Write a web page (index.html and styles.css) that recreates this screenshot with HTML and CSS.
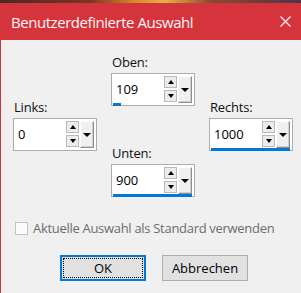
FILE: index.html
```html
<!DOCTYPE html>
<html lang="de">
<head>
    <meta charset="UTF-8">
    <title>Benutzerdefinierte Auswahl</title>
    <link rel="stylesheet" href="styles.css">
</head>
<body>
    <!-- Wallpaper strip above the dialog -->
    <div class="wallpaper"></div>

    <div class="window">
        <!-- Title Bar -->
        <div class="titlebar">
            <span class="title">Benutzerdefinierte Auswahl</span>
            <svg class="close" width="11" height="11" viewBox="0 0 11 11">
                <path d="M0.5 0.5 L10.5 10.5 M10.5 0.5 L0.5 10.5" stroke="#fff" stroke-width="1.1" fill="none"/>
            </svg>
        </div>

        <div class="dialog-body">
            <!-- Spin Fields -->
            <div class="fields">
                <div class="column side">
                    <div class="field">
                        <label class="field-label">Links:</label>
                        <div class="spinbox">
                            <div class="spin-row">
                                <span class="value">0</span>
                                <div class="spin-buttons">
                                    <span class="spin-btn"><i class="tri up"></i></span>
                                    <span class="spin-btn"><i class="tri down"></i></span>
                                </div>
                                <span class="drop-btn"><i class="tri drop"></i></span>
                            </div>
                            <div class="track"></div>
                        </div>
                    </div>
                </div>

                <div class="column middle">
                    <div class="field">
                        <label class="field-label">Oben:</label>
                        <div class="spinbox">
                            <div class="spin-row">
                                <span class="value">109</span>
                                <div class="spin-buttons">
                                    <span class="spin-btn"><i class="tri up"></i></span>
                                    <span class="spin-btn"><i class="tri down"></i></span>
                                </div>
                                <span class="drop-btn"><i class="tri drop"></i></span>
                            </div>
                            <div class="track"><div class="bar" style="width: 8px"></div></div>
                        </div>
                    </div>
                    <div class="field lower">
                        <label class="field-label">Unten:</label>
                        <div class="spinbox">
                            <div class="spin-row">
                                <span class="value">900</span>
                                <div class="spin-buttons">
                                    <span class="spin-btn"><i class="tri up"></i></span>
                                    <span class="spin-btn"><i class="tri down"></i></span>
                                </div>
                                <span class="drop-btn"><i class="tri drop"></i></span>
                            </div>
                            <div class="track"><div class="bar" style="width: 100%"></div></div>
                        </div>
                    </div>
                </div>

                <div class="column side">
                    <div class="field">
                        <label class="field-label">Rechts:</label>
                        <div class="spinbox">
                            <div class="spin-row">
                                <span class="value">1000</span>
                                <div class="spin-buttons">
                                    <span class="spin-btn"><i class="tri up"></i></span>
                                    <span class="spin-btn"><i class="tri down"></i></span>
                                </div>
                                <span class="drop-btn"><i class="tri drop"></i></span>
                            </div>
                            <div class="track"><div class="bar" style="width: 100%"></div></div>
                        </div>
                    </div>
                </div>
            </div>

            <!-- Default checkbox -->
            <div class="check-row">
                <span class="checkbox"></span>
                <span class="check-label">Aktuelle Auswahl als Standard verwenden</span>
            </div>

            <!-- Buttons -->
            <div class="buttons">
                <button class="btn default"><span>OK</span></button>
                <button class="btn">Abbrechen</button>
            </div>
        </div>
    </div>
</body>
</html>
```

FILE: styles.css
```css
/* General Styles */
html, body {
    margin: 0;
    padding: 0;
    background: #f0f0f0;
}

body {
    font-family: 'Open Sans', 'Noto Sans', sans-serif;
    width: 301px;
    height: 293px;
    overflow: hidden;
}

/* Wallpaper strip */
.wallpaper {
    height: 3px;
    background: linear-gradient(90deg, #4a2a24 0%, #7b3424 30%, #d98a2a 45%, #e8b040 55%, #8a4a30 70%, #4e3448 100%);
}

/* Window */
.window {
    height: 290px;
}

.titlebar {
    height: 37px;
    background-color: #d5343c;
    display: flex;
    align-items: center;
    justify-content: space-between;
    padding: 0 10px 0 11px;
}

.title {
    color: #fff4f6;
    font-size: 15px;
    letter-spacing: -0.45px;
    line-height: 20px;
}

.close {
    display: block;
}

.dialog-body {
    height: 253px;
    border-left: 1px solid #d5343c;
    background: #f0f0f0;
    padding-left: 12px;
}

/* Spin fields */
.fields {
    display: flex;
    gap: 14px;
    padding-top: 13px;
}

.column {
    width: 84px;
}

.column.side {
    padding-top: 45px;
}

.field-label {
    display: block;
    font-size: 13px;
    line-height: 18px;
    letter-spacing: -0.2px;
    color: #111;
    margin-bottom: 2px;
    padding-left: 1px;
}

.field.lower {
    margin-top: 38px;
}

.spinbox {
    box-sizing: border-box;
    width: 84px;
    height: 33px;
    border: 1px solid #adadad;
    background: #fff;
    padding: 2px 2px 0 0;
}

.spin-row {
    display: flex;
    height: 26px;
}

.value {
    flex: 1;
    font-size: 13px;
    line-height: 26px;
    padding-left: 4px;
    color: #000;
}

.spin-buttons {
    display: flex;
    flex-direction: column;
    gap: 2px;
    width: 13px;
    margin-right: 1px;
}

.spin-btn {
    box-sizing: border-box;
    height: 12px;
    border: 1px solid #b9b9b9;
    background: #ececec;
    display: flex;
    align-items: center;
    justify-content: center;
}

.drop-btn {
    box-sizing: border-box;
    width: 14px;
    height: 27px;
    background: #f0f0f0;
    border: 1px solid;
    border-color: #fdfdfd #8d8d8d #8d8d8d #fdfdfd;
    box-shadow: inset -1px -1px 0 #d0d0d0;
    display: flex;
    align-items: center;
    justify-content: center;
}

.tri {
    display: block;
    width: 0;
    height: 0;
    border-left: 3.5px solid transparent;
    border-right: 3.5px solid transparent;
}

.tri.up {
    border-bottom: 4px solid #000;
}

.tri.down {
    border-top: 4px solid #000;
}

.tri.drop {
    border-left-width: 4px;
    border-right-width: 4px;
    border-top: 4px solid #000;
}

.track {
    height: 3px;
    margin: 1px 0 0 1px;
}

.bar {
    height: 3px;
    background: #0078d7;
}

/* Checkbox */
.check-row {
    display: flex;
    align-items: center;
    margin-top: 22px;
    padding-left: 2px;
}

.checkbox {
    box-sizing: border-box;
    width: 13px;
    height: 13px;
    border: 1px solid #c4c4c4;
    background: #fbfbfb;
    margin-right: 5px;
}

.check-label {
    font-size: 13px;
    line-height: 18px;
    letter-spacing: -0.3px;
    color: #6d6d6d;
}

/* Buttons */
.buttons {
    display: flex;
    gap: 16px;
    margin-top: 18px;
    padding-left: 47px;
}

.btn {
    box-sizing: border-box;
    width: 86px;
    height: 26px;
    font-family: 'Open Sans', 'Noto Sans', sans-serif;
    font-size: 13px;
    color: #000;
    background: #e1e1e1;
    border: 1px solid #adadad;
    padding: 0;
}

.btn.default {
    border: 2px solid #0078d7;
    padding: 1px;
}

.btn.default span {
    display: block;
    height: 100%;
    line-height: 18px;
    border: 1px dotted #000;
    box-sizing: border-box;
}
```
